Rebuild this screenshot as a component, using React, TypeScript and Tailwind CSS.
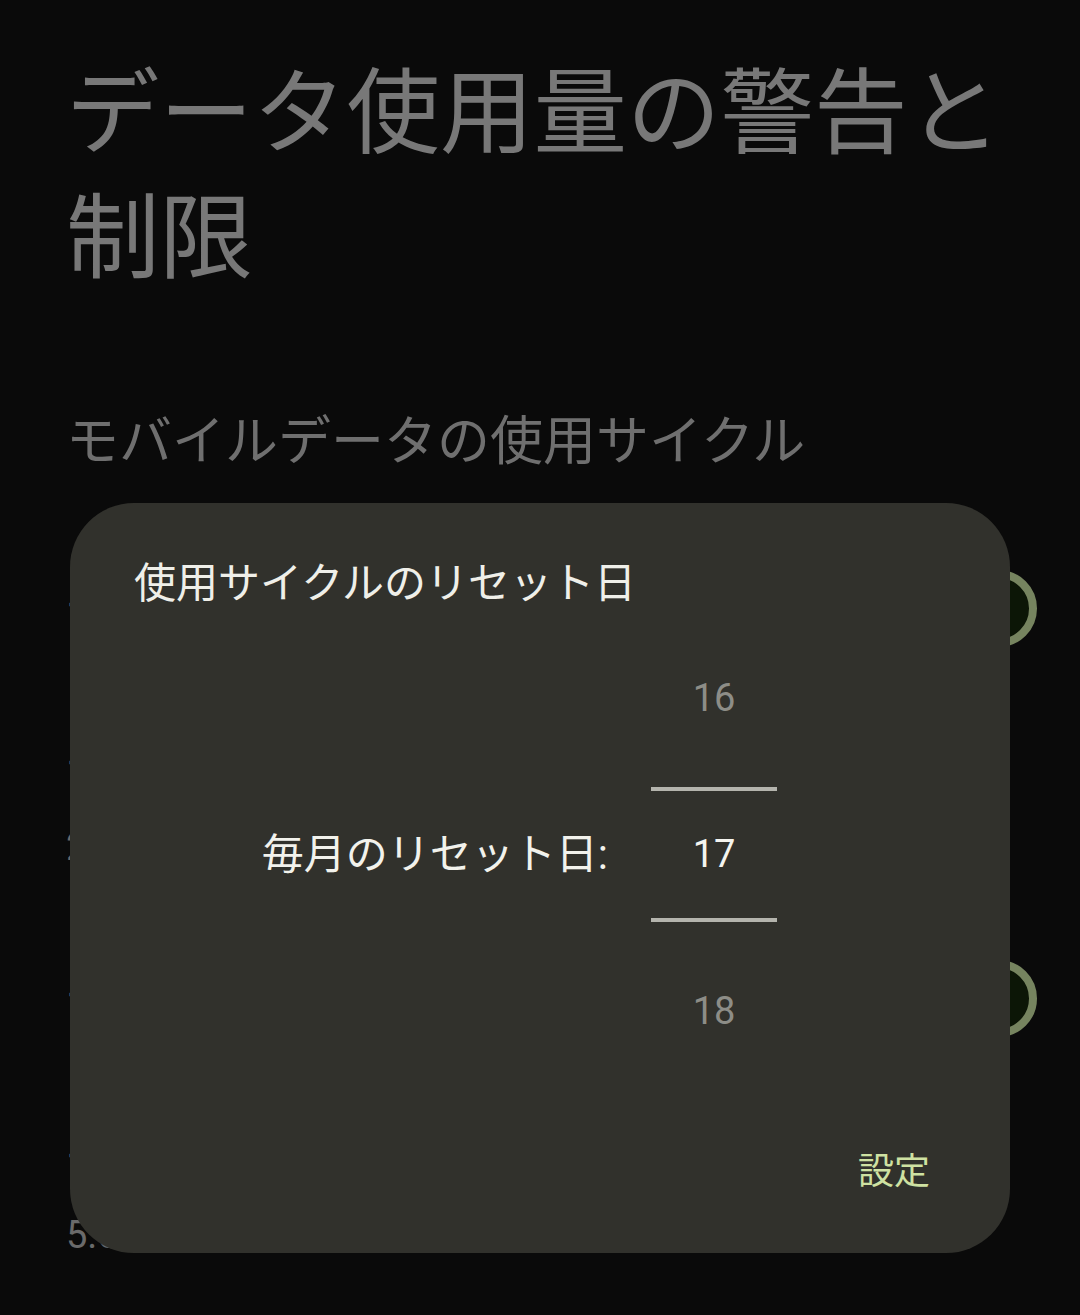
import React from 'react';

const FONT = { fontFamily: '"Roboto", "Noto Sans CJK JP", sans-serif' };

const Track = () => (
  <div className="w-[135px] h-[77px] rounded-full border-[8px] border-[#76845f] bg-[#0c1606] shrink-0" />
);

const DayPicker = () => (
  <div className="w-[126px] flex flex-col items-stretch">
    <div className="h-[178px] flex items-center justify-center text-[38px] text-[#8d8d87]">16</div>
    <div className="h-[4px] bg-[#b4b4ad]" />
    <div className="h-[127px] flex items-center justify-center text-[38px] text-[#f4f4ef]">17</div>
    <div className="h-[4px] bg-[#b4b4ad]" />
    <div className="h-[178px] flex items-center justify-center text-[38px] text-[#8d8d87]">18</div>
  </div>
);

const App = () => {
  return (
    <div className="relative w-[1080px] h-[1315px] overflow-hidden bg-[#0a0a0a]" style={FONT}>
      <div className="pl-[66px] pr-[30px]">
        <h1 className="pt-[52px] text-[93.5px] leading-[125px] font-normal text-[#787878]">
          データ使用量の警告と制限
        </h1>
        <p className="mt-[105px] text-[53px] leading-[70px] text-[#6f6f6f]">モバイルデータの使用サイクル</p>

        <div className="mt-[63px] mr-[13px] h-[136px] flex items-center justify-between">
          <span className="text-[42px] text-[#747474]">データ警告を設定</span>
          <Track />
        </div>

        <div className="pt-[63px] pb-[55px] flex flex-col gap-[24px]">
          <span className="text-[42px] leading-[56px] text-[#747474]">データ警告</span>
          <span className="text-[38px] leading-[56px] text-[#6a6a6a]">2.00 GB</span>
        </div>

        <div className="mr-[13px] h-[136px] flex items-center justify-between">
          <span className="text-[42px] text-[#747474]">データ上限を設定</span>
          <Track />
        </div>

        <div className="pt-[66px] flex flex-col gap-[19px]">
          <span className="text-[42px] leading-[56px] text-[#747474]">データ上限</span>
          <span className="text-[38px] leading-[56px] text-[#6a6a6a]">5.00 GB</span>
        </div>
      </div>

      {/* dialog */}
      <div className="absolute left-[70px] top-[503px] w-[940px] h-[750px] rounded-[64px] bg-[#31312c] flex flex-col">
        <h2 className="pt-[56px] pl-[64px] text-[42px] leading-[50px] font-normal text-[#efefe9]">
          使用サイクルのリセット日
        </h2>
        <div className="flex items-center">
          <div className="w-[538px] text-right text-[42px] text-[#f2f2ec]">毎月のリセット日:</div>
          <div className="ml-[43px]">
            <DayPicker />
          </div>
        </div>
        <div className="mt-[48px] pr-[80px] flex justify-end">
          <button className="text-[36px] leading-[48px] text-[#cfe2a2]">設定</button>
        </div>
      </div>
    </div>
  );
};

export default App;
